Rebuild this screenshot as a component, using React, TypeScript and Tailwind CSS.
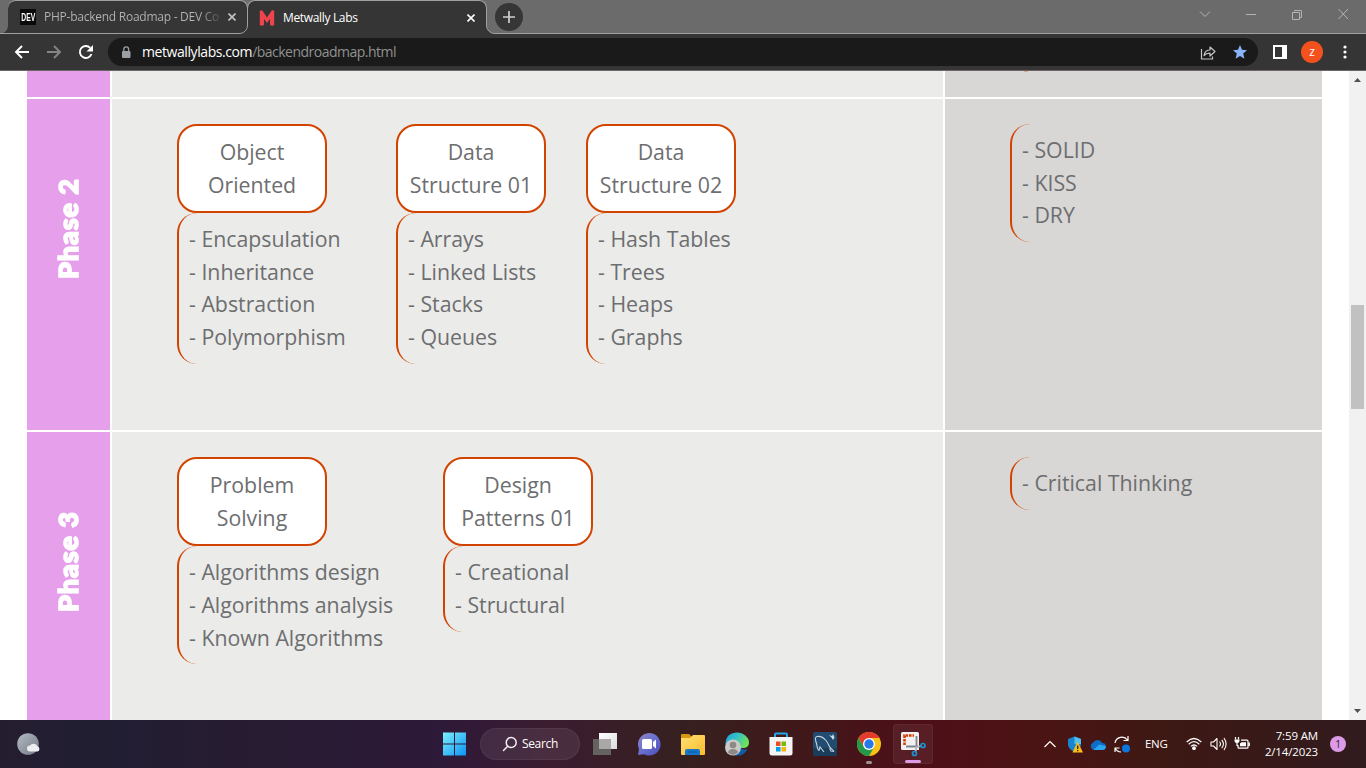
import React from "react";

function TabFlare({ side }: { side: "left" | "right" }) {
  return (
    <svg
      className={side === "left" ? "absolute -left-[8px] top-[25px]" : "absolute -right-[8px] top-[25px]"}
      width="9"
      height="9"
      viewBox="0 0 9 9"
    >
      {side === "left" ? (
        <>
          <path d="M9 0v9H0v-.5c5 0 8.500-3.500 8.500-8.500z" fill="#353535" />
          <path d="M8.500 0c0 5-3.500 8.500-8.500 8.500" fill="none" stroke="#a0a0a0" />
        </>
      ) : (
        <>
          <path d="M0 0v9h9v-.5c-5 0-8.500-3.500-8.500-8.500z" fill="#353535" />
          <path d="M.5 0c0 5 3.500 8.500 8.500 8.500" fill="none" stroke="#a0a0a0" />
        </>
      )}
    </svg>
  );
}

function CloseIcon({ color }: { color: string }) {
  return (
    <svg width="8" height="8" viewBox="0 0 8 8" stroke={color} strokeWidth="1.6" className="shrink-0">
      <path d="M.5.5l7 7M7.500.5l-7 7" />
    </svg>
  );
}

function TabStrip() {
  return (
    <div className="flex h-[34px] border-b border-[#a0a0a0] bg-[#6b6b6b]">
      <svg className="mt-[25px]" width="8" height="8" viewBox="0 0 8 8">
        <path d="M8 0v8H3c3-1 5-4 5-8z" fill="#363636" />
      </svg>
      <div className="flex h-[33px] w-[240px] items-center rounded-tl-lg rounded-tr-lg border-t border-r border-[#a0a0a0] bg-[#363636] pl-3">
        <div className="flex h-4 w-4 items-center justify-center bg-[#0a0a0a]">
          <span className="scale-x-[0.68] font-['Liberation_Sans'] text-[10px] font-bold text-white">DEV</span>
        </div>
        <div className="ml-2 w-[177px] bg-gradient-to-r from-[#b5b5b5] from-88% to-[#484848] bg-clip-text text-[12px] leading-5 tracking-[-0.25px] whitespace-nowrap text-transparent">
          PHP-backend Roadmap - DEV Co
        </div>
        <div className="ml-[7px]">
          <CloseIcon color="#c4c4c4" />
        </div>
      </div>
      <div className="relative -ml-px h-[34px] w-[240px]">
        <div className="flex h-[34px] w-[240px] items-center rounded-t-lg border-x border-t border-[#a0a0a0] bg-[#353535] pl-[11px]">
          <svg width="16" height="16" viewBox="0 0 16 16">
            <path d="M.8 15V1.200C1.500.1 3.200 0 4 1.500L8 7.500l4-6C12.800 0 14.500.1 15.200 1.200V15q-2 1.500-4.200 0V9L8 13 5 9v6q-2.200 1.500-4.200 0z" fill="#f0444c" />
          </svg>
          <div className="ml-2 w-[184px] text-[12px] leading-5 tracking-[-0.34px] text-white">Metwally Labs</div>
          <CloseIcon color="#fff" />
        </div>
        <TabFlare side="left" />
        <TabFlare side="right" />
      </div>
      <div className="mt-[3px] ml-[8px] flex h-7 w-7 items-center justify-center rounded-full bg-[#363636]">
        <svg width="12" height="12" viewBox="0 0 12 12" stroke="#cfcfcf" strokeWidth="1.700">
          <path d="M6 0v12M0 6h12" />
        </svg>
      </div>
      <div className="flex flex-1 justify-end pt-[8px] pr-[17px]">
        <svg width="150" height="12" viewBox="0 0 150 12" fill="none" stroke="#b4b4b4">
          <path d="M1 3.500l5 5 5-5M47 6.500h10M93.500 4.500h7v7h-7zM95.500 3.500V2.500h6.500q.5 0 .5.500V9.500h-1.500M139.500 1l9.500 10M149 1l-9.500 10" />
        </svg>
      </div>
    </div>
  );
}

function Toolbar() {
  return (
    <div className="flex h-[37px] items-center border-b border-[#6b6665] bg-[#353535]">
      <svg className="ml-[14px]" width="80" height="16" viewBox="0 0 80 16" fill="none" strokeWidth="1.900">
        <path d="M15 8H2M8 2L2 8l6 6" stroke="#fff" />
        <path d="M33 8h13M40 2l6 6-6 6" stroke="#858585" />
        <path d="M77.500 10a6 6 0 1 1-1.300-6.200" stroke="#fff" />
        <path d="M79 1v6.500h-6.500z" fill="#fff" />
      </svg>
      <div className="ml-[14px] flex h-7 w-[1150px] items-center rounded-full bg-[#1a1a1a]">
        <svg className="ml-[13px]" width="10" height="13" viewBox="0 0 10 13">
          <rect x="1" y="5" width="8.500" height="7" rx="1" fill="#9aa0a6" />
          <path d="M2.800 5V3.300a2.400 2.400 0 0 1 4.800 0V5" fill="none" stroke="#9aa0a6" strokeWidth="1.300" />
        </svg>
        <div className="ml-[11px] flex-1 text-[14px] leading-5 tracking-[-0.42px] whitespace-nowrap text-white">
          metwallylabs.com<span className="tracking-[-0.51px] text-[#919191]">/backendroadmap.html</span>
        </div>
        <svg className="mr-[17px]" width="16" height="15" viewBox="0 0 16 15" fill="none" stroke="#c6c6c6" strokeWidth="1.200">
          <path d="M1.500 4v10h11v-2.500" />
          <path d="M4 10.500c.7-4 3-5.500 6-5.500V2l5 4.500-5 4.500V8.200c-2.500 0-4.500.5-6 2.300z" strokeLinejoin="round" />
        </svg>
        <svg className="mr-[11px]" width="14" height="14" viewBox="0 0 14 14">
          <path d="M7 0l2 4.700 5 .5-3.800 3.400 1.200 5.200L7 11.100l-4.400 2.700 1.200-5.200L0 5.200l5-.5z" fill="#8ab4f8" />
        </svg>
      </div>
      <svg className="ml-[15px]" width="14" height="14" viewBox="0 0 14 14">
        <path d="M0 0h14v14H0zM2 2v10h7V2z" fill="#fff" fillRule="evenodd" />
      </svg>
      <div className="ml-[14px] flex h-[22px] w-[22px] items-center justify-center rounded-full bg-[#f4511e] text-[12px] leading-none text-white">
        z
      </div>
      <svg className="ml-5" width="4" height="14" viewBox="0 0 4 14" fill="#fff">
        <circle cx="2" cy="2" r="1.600" />
        <circle cx="2" cy="7" r="1.600" />
        <circle cx="2" cy="12" r="1.600" />
      </svg>
    </div>
  );
}

function TopicList({ items }: { items: string[] }) {
  return (
    <ul className="w-max rounded-[20px] border-l-2 border-[#d34300] py-[10px] pl-[10px] pr-px leading-[32.67px] whitespace-nowrap">
      {items.map((item) => (
        <li key={item}>- {item}</li>
      ))}
    </ul>
  );
}

type Topic = { title: [string, string]; items: string[] };

function TopicColumn({ topic, minimum }: { topic: Topic; minimum: string }) {
  return (
    <div className={minimum}>
      <div className="h-[89px] w-[150px] rounded-[20px] border-2 border-[#d34300] bg-white pt-[9px] text-center leading-[33px] whitespace-nowrap">
        {topic.title[0]}
        <br />
        {topic.title[1]}
      </div>
      <TopicList items={topic.items} />
    </div>
  );
}

function Phase({ name, height, topics, widths, skills }: { name: string; height: string; topics: Topic[]; widths: string[]; skills: string[] }) {
  return (
    <div className={"flex shrink-0 gap-[2px] " + height}>
      <div className="flex w-[83px] justify-center bg-[#e59feb] pt-[79px] pr-[2px]">
        <div className="h-[102px] rotate-180 text-center font-['Lato'] text-[27px] leading-[28px] font-black tracking-[0.9px] whitespace-nowrap text-white [-webkit-text-stroke:1.6px_white] [writing-mode:vertical-rl]">
          {name}
        </div>
      </div>
      <div className="flex w-[831px] items-start bg-[#ebebe9] pt-[25px] pl-[65px]">
        {topics.map((topic, i) => (
          <TopicColumn key={i} topic={topic} minimum={widths[i]} />
        ))}
      </div>
      <div className="w-[377px] bg-[#d8d7d5] pt-[25px] pl-[65px]">
        <TopicList items={skills} />
      </div>
    </div>
  );
}

const phaseTwo: Topic[] = [
  { title: ["Object", "Oriented"], items: ["Encapsulation", "Inheritance", "Abstraction", "Polymorphism"] },
  { title: ["Data", "Structure 01"], items: ["Arrays", "Linked Lists", "Stacks", "Queues"] },
  { title: ["Data", "Structure 02"], items: ["Hash Tables", "Trees", "Heaps", "Graphs"] },
];

const phaseThree: Topic[] = [
  { title: ["Problem", "Solving"], items: ["Algorithms design", "Algorithms analysis", "Known Algorithms"] },
  { title: ["Design", "Patterns 01"], items: ["Creational", "Structural"] },
];

function Page() {
  return (
    <div className="flex h-[649px] overflow-hidden bg-white">
      <div className="flex flex-1 flex-col gap-[2px] pl-[27px] text-[21.3px] text-[#6d6e70]">
        <div className="flex h-[26px] shrink-0 gap-[2px]">
          <div className="w-[83px] bg-[#e59feb]" />
          <div className="w-[831px] bg-[#ebebe9]" />
          <div className="w-[377px] bg-[#d8d7d5] pl-[79px]">
            <div className="h-px w-1 bg-[#dda58e]" />
          </div>
        </div>
        <Phase name="Phase 2" height="h-[331.25px]" topics={phaseTwo} widths={["w-[219px]", "w-[190px]", "w-[190px]"]} skills={["SOLID", "KISS", "DRY"]} />
        <Phase name="Phase 3" height="h-[331px]" topics={phaseThree} widths={["w-[266px]", "w-[190px]"]} skills={["Critical Thinking"]} />
      </div>
      <div className="flex w-[17px] flex-col items-center bg-[#f1f1f1] py-[7px]">
        <svg width="7" height="4" viewBox="0 0 7 4" fill="#505050">
          <path d="M0 4L3.500 0 7 4z" />
        </svg>
        <div className="mt-[223px] h-[104px] w-[13px] bg-[#c1c1c1]" />
        <svg className="mt-auto" width="7" height="4" viewBox="0 0 7 4" fill="#505050">
          <path d="M0 0l3.500 4L7 0z" />
        </svg>
      </div>
    </div>
  );
}

function Slot({ children, active, mark }: { children: React.ReactNode; active?: boolean; mark?: string }) {
  return (
    <div
      className={
        active
          ? "relative mx-[2px] flex h-10 w-10 items-center justify-center rounded-[4px] border border-white/5 bg-white/6"
          : "relative flex h-10 w-11 items-center justify-center"
      }
    >
      {children}
      {mark && <div className={"absolute bottom-0 h-[3px] rounded-full " + mark} />}
    </div>
  );
}

function Apps() {
  return (
    <div className="flex items-center">
      <Slot>
        <svg width="24" height="24" viewBox="0 0 24 24">
          <defs>
            <linearGradient id="win" x1="0" y1="0" x2="1" y2="1" gradientUnits="objectBoundingBox">
              <stop offset="0" stopColor="#7df0fb" />
              <stop offset="1" stopColor="#0a93f5" />
            </linearGradient>
          </defs>
          <path d="M0 .5h11v11H0zM12 .5h11v11H12zM0 12.500h11v11H0zM12 12.500h11v11H12z" fill="url(#win)" />
        </svg>
      </Slot>
      <div className="mr-[3px] ml-[3px] flex h-8 w-[100px] items-center rounded-full border border-white/5 bg-white/8 pl-[21px] text-[12px] text-white">
        <svg width="16" height="16" viewBox="0 0 16 16" fill="none" stroke="#f3edf3" strokeWidth="1.500">
          <circle cx="9.200" cy="6.500" r="5" />
          <path d="M5.700 10.200L1.500 14.500" strokeLinecap="round" />
        </svg>
        <span className="ml-[4px] tracking-[-0.35px]">Search</span>
      </div>
      <Slot>
        <svg width="24" height="22" viewBox="0 0 24 22">
          <defs>
            <linearGradient id="tv" x1="0" y1="0" x2="1" y2="1">
              <stop offset="0" stopColor="#fff" />
              <stop offset="1" stopColor="#dcdcdc" />
            </linearGradient>
          </defs>
          <path d="M0 6h18v16H0z" fill="#656361" />
          <path d="M6 0h18v16H6z" fill="url(#tv)" />
          <path d="M6 6h12v10H6z" fill="#a9a8a7" />
        </svg>
      </Slot>
      <Slot>
        <svg width="24" height="24" viewBox="0 0 24 24">
          <defs>
            <linearGradient id="chat" x1="0" y1="0" x2="1" y2="1">
              <stop offset="0" stopColor="#8f83c4" />
              <stop offset=".5" stopColor="#6870cf" />
              <stop offset="1" stopColor="#4b49b8" />
            </linearGradient>
          </defs>
          <path d="M12 1a11.300 11.300 0 1 1-5 21.300L1 23l1-6A11.300 11.300 0 0 1 12 1z" fill="url(#chat)" />
          <rect x="5" y="7" width="10" height="10" rx="1.500" fill="#fff" />
          <path d="M16 10l3-2.500v9L16 14z" fill="#fff" />
        </svg>
      </Slot>
      <Slot>
        <svg width="26" height="24" viewBox="0 0 26 24">
          <defs>
            <linearGradient id="dir" x1="0" y1="0" x2="1" y2="1">
              <stop offset="0" stopColor="#ffdf75" />
              <stop offset="1" stopColor="#fabd2c" />
            </linearGradient>
          </defs>
          <path d="M1 3q0-1 1-1h7l3 3v5H1z" fill="#d9980d" />
          <path d="M1 6h9l3-3h11q1 0 1 1v18q0 1-1 1H2q-1 0-1-1z" fill="url(#dir)" />
          <path d="M5 23v-4q0-2 2-2h11q2 0 2 2v4z" fill="#1876c9" />
          <path d="M8 20h9" stroke="#0b559f" />
        </svg>
      </Slot>
      <Slot>
        <svg width="24" height="24" viewBox="0 0 24 24">
          <defs>
            <linearGradient id="edge" x1="0" y1="0" x2="1" y2=".4">
              <stop offset="0" stopColor="#209edc" />
              <stop offset=".5" stopColor="#35c1c9" />
              <stop offset="1" stopColor="#6ce05c" />
            </linearGradient>
          </defs>
          <path d="M.5 12h16v4.500c3 1.500 5 1 6 .500C20 22 16 24 12 23.500A11.500 11.500 0 0 1 .5 12z" fill="#115aa6" />
          <path d="M.5 12C.5 4 6 .5 12 .5S24 5 24 10.500c0 4-3 6-7.500 5.500z" fill="url(#edge)" />
          <circle cx="8" cy="15.500" r="8" fill="#c9c9c8" />
          <circle cx="8" cy="13" r="3.300" fill="#8e8987" />
          <path d="M2.800 20.500q1-3.500 5.200-3.500t5.200 3.500Q8 25 2.800 20.500z" fill="#8e8987" />
        </svg>
      </Slot>
      <Slot>
        <svg width="24" height="24" viewBox="0 0 24 24">
          <path d="M6 6V2.500Q6 1.500 7 1.500h10q1 0 1 1V6" fill="none" stroke="#22a7e8" strokeWidth="2" />
          <path d="M.5 5h23v16q0 2.500-2.500 2.500H3Q.5 23.500.5 21z" fill="#f5f5f5" />
          <path d="M7 9.500h4.500V14H7z" fill="#f04e22" />
          <path d="M12.500 9.500H17V14h-4.500z" fill="#79b80b" />
          <path d="M7 15h4.500v4.500H7z" fill="#00a0ec" />
          <path d="M12.500 15H17v4.500h-4.500z" fill="#fbb503" />
        </svg>
      </Slot>
      <Slot>
        <svg width="24" height="24" viewBox="0 0 24 24">
          <rect width="24" height="24" rx="2" fill="#214b70" />
          <path d="M0 16h24v6q0 2-2 2H2q-2 0-2-2z" fill="#1b3d5c" />
          <path d="M6 18.500c-2.500-2-1.500-4-2.500-7S1.500 5 4 4.500s6 .5 9 4 2.500 5.500 4.500 7.500 2 1 3.500 3.500M6 18.500l1-3.500 4 5M16.500 16.500l1.500 2.500 3 .500" fill="none" stroke="#c5d4df" strokeWidth="1.100" />
          <path d="M16 3l3 1 1-2 1.500 3.500L20 8l-1.500-2.500z" fill="#d2dee7" />
        </svg>
      </Slot>
      <Slot mark="w-[6px] bg-[#a0908f]">
        <svg width="24" height="24" viewBox="0 0 24 24">
          <circle cx="12" cy="12" r="12" fill="#fbc116" />
          <path d="M12 12L6.800 15 1.600 6A12 12 0 0 1 22.400 6H12z" fill="#e33b2e" />
          <path d="M1.600 6l5.200 9L12 18l5.200-3L12 24A12 12 0 0 1 1.600 6z" fill="#229a4a" />
          <circle cx="12" cy="12" r="6" fill="#fff" />
          <circle cx="12" cy="12" r="4.700" fill="#2878e8" />
        </svg>
      </Slot>
      <Slot active mark="w-4 bg-[#dc9be6]">
        <svg className="overflow-visible" width="24" height="24" viewBox="0 0 24 24">
          <path d="M1.500 0h15q1.500 0 1.500 1.500V18H1.500Q0 18 0 16.500v-15Q0 0 1.500 0z" fill="#f1f1f1" />
          <path d="M3.500 13V3.500H13" fill="none" stroke="#d83b01" strokeWidth="2.600" strokeDasharray="2.600 .9" />
          <path d="M15.500 4v11M5 14.500h12" stroke="#7d858c" strokeWidth="1.800" />
          <path d="M14.500 20l1-5 5-1" fill="none" stroke="#aeb6bc" strokeWidth="1.600" />
          <circle cx="13.500" cy="21.500" r="2" fill="none" stroke="#1992d4" strokeWidth="1.700" />
          <circle cx="22" cy="13.500" r="2" fill="none" stroke="#1992d4" strokeWidth="1.700" />
        </svg>
      </Slot>
    </div>
  );
}

function Tray() {
  return (
    <div className="ml-auto flex items-center text-[11.500px] text-white">
      <svg width="12" height="8" viewBox="0 0 12 8" fill="none" stroke="#fff" strokeWidth="1.200">
        <path d="M.5 7L6 1.500 11.500 7" />
      </svg>
      <svg className="ml-[11px]" width="16" height="17" viewBox="0 0 16 17">
        <path d="M7.500.5L14 3v5c0 4-3 6-6.500 8C4 14 1 12 1 8V3z" fill="#1685d2" />
        <path d="M7.500.5L14 3v5H7.500z" fill="#4fc0ee" />
        <path d="M10.500 5.500L16 16.500H5.500z" fill="#fcbd16" />
        <path d="M10.700 9.500v3.500M10.700 14v1.300" stroke="#222" strokeWidth="1.300" />
      </svg>
      <svg className="ml-[7px]" width="16" height="11" viewBox="0 0 16 11">
        <path d="M4 11a3.800 3.800 0 0 1-1-7.200A5.200 5.200 0 0 1 12.200 4 3.500 3.500 0 0 1 12.500 11z" fill="#0f6cc4" />
        <path d="M3.500 11L9 5.500 15.800 7Q16 11 12.500 11z" fill="#29a4ee" />
      </svg>
      <svg className="ml-[8px]" width="17" height="17" viewBox="0 0 17 17" fill="none" stroke="#fff" strokeWidth="1.200">
        <path d="M1 7A7 7 0 0 1 13.500 4M14 0v4.500H9.500M1 16v-4h4.500M1.300 12.500Q3 15.800 7 16" />
        <circle cx="12" cy="12.500" r="4" fill="#0b76de" stroke="none" />
      </svg>
      <span className="ml-[14px] w-[24px] tracking-[-0.3px]">ENG</span>
      <svg className="ml-[17px]" width="16" height="14" viewBox="0 0 16 14" fill="none" stroke="#fff" strokeWidth="1.200">
        <path d="M.7 5Q8-2 15.300 5M2.700 7.200Q8 2.200 13.300 7.200M4.900 9.400Q8 6.600 11.100 9.400" />
        <circle cx="8" cy="11.200" r="1.300" fill="#fff" />
      </svg>
      <svg className="ml-[8px]" width="17" height="14" viewBox="0 0 17 14" fill="none" stroke="#fff" strokeWidth="1.100">
        <path d="M1 5v4h2.500L7 12.500v-11L3.500 5zM9.500 4.500q2 2.500 0 5M11.800 2.800q3.200 4.200 0 8.400M14 1q4.200 6 0 12" strokeLinejoin="round" />
      </svg>
      <svg className="ml-[7px]" width="16" height="14" viewBox="0 0 16 14" fill="none" stroke="#fff" strokeWidth="1.200">
        <path d="M7 3.200h6q1 0 1 1v6q0 1-1 1H5q-1 0-1-1V8M15.300 5.500v3.500M1.500 0v2.500M4.500 0v2.500M3 5v4" />
        <path d="M.5 2.500h5V4q0 2-2.500 2T.5 4z" fill="#fff" stroke="none" />
        <path d="M7.500 5.200H12v4H6V6.500z" fill="#fff" stroke="none" />
      </svg>
      <div className="ml-[7px] w-[61px] text-right leading-[16px] tracking-[-0.15px] whitespace-nowrap">
        7:59 AM
        <br />
        2/14/2023
      </div>
      <div className="mr-5 ml-[12px] flex h-4 w-4 items-center justify-center rounded-full bg-[#dc9be6] text-[10px] text-[#2d1a2d]">1</div>
    </div>
  );
}

function Taskbar() {
  return (
    <div className="flex h-12 items-center bg-[linear-gradient(90deg,#241d2f_0%,#211e32_7%,#271b31_20%,#2d1939_32%,#3b1c30_40%,#36201f_50%,#421719_60%,#4e0f18_67%,#4b1414_76%,#3f1813_84%,#311b1e_100%)]">
      <svg className="ml-[17px] mr-[393px]" width="23" height="22" viewBox="0 0 23 22">
        <defs>
          <linearGradient id="moon" x1="0" y1="0" x2="1" y2="1">
            <stop offset="0" stopColor="#b5bbc4" />
            <stop offset="1" stopColor="#737b86" />
          </linearGradient>
        </defs>
        <circle cx="11" cy="11" r="10.800" fill="url(#moon)" />
        <path d="M13 18.500a3 3 0 0 1 0-6 4.500 4.500 0 0 1 7.500.8 2.700 2.700 0 0 1 0 5.200z" fill="#eceef0" />
      </svg>
      <Apps />
      <Tray />
    </div>
  );
}

export default function App() {
  return (
    <div className="h-[768px] w-[1366px] overflow-hidden font-['Open_Sans','Noto_Sans',sans-serif]">
      <TabStrip />
      <Toolbar />
      <Page />
      <Taskbar />
    </div>
  );
}
